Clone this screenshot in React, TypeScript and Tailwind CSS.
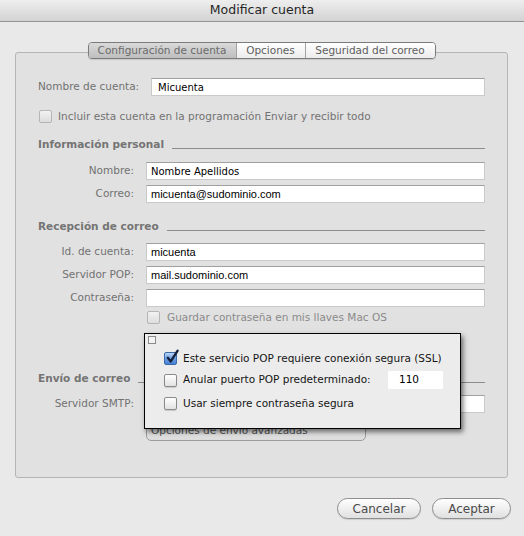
import React from 'react';

type FieldProps = { value?: string; helvetica?: boolean };

const Field: React.FC<FieldProps> = ({ value = '', helvetica = false }) => (
  <div
    className={
      helvetica
        ? "flex h-[18px] flex-1 items-center border border-[#cacaca] border-t-[#a0a0a0] bg-white pl-[4px] font-['Liberation_Sans',sans-serif] text-[11px] text-black"
        : 'flex h-[18px] flex-1 items-center border border-[#cacaca] border-t-[#a0a0a0] bg-white pl-[4px] text-[10px] text-black'
    }
  >
    {value}
  </div>
);

const Box: React.FC<{ dim?: boolean }> = ({ dim = false }) => (
  <span
    className={
      dim
        ? 'h-[13px] w-[13px] shrink-0 rounded-[2px] border border-[#b6b6b6] bg-gradient-to-b from-[#f2f2f2] to-[#dddddd]'
        : 'h-[13px] w-[13px] shrink-0 rounded-[2px] border border-[#8a8a8a] bg-gradient-to-b from-white to-[#e2e2e2] shadow-[0_1px_1px_rgba(0,0,0,0.15)]'
    }
  />
);

const CheckedBox: React.FC = () => (
  <span className="relative h-[13px] w-[13px] shrink-0 rounded-[2px] border border-[#3a69ab] bg-gradient-to-b from-[#bcd6f6] via-[#6b9ee2] to-[#4782d6]">
    <svg viewBox="0 0 14 14" className="absolute -top-[4px] left-[0px] h-[15px] w-[15px] overflow-visible">
      <path
        d="M2.6 8.2 L5.4 11.6 L11.8 1.6"
        fill="none"
        stroke="#15203a"
        strokeWidth="2.2"
        strokeLinecap="round"
        strokeLinejoin="round"
      />
    </svg>
  </span>
);

const Header: React.FC<{ text: string }> = ({ text }) => (
  <div className="flex h-[12px] items-start gap-[8px]">
    <span className="font-bold leading-[12px] text-[#747474]">{text}</span>
    <div className="mt-[10px] h-px flex-1 bg-[#8c8c8c]" />
  </div>
);

const Row: React.FC<{ label: string; children: React.ReactNode; className?: string }> = ({
  label,
  children,
  className = '',
}) => (
  <div className={`flex h-[18px] items-center gap-[12px] ${className}`}>
    <span className="w-[96px] text-right">{label}</span>
    {children}
  </div>
);

export default function App() {
  return (
    <div className="relative h-[536px] w-[524px] overflow-hidden bg-[#e9e9e9] font-['DejaVu_Sans',sans-serif] text-[10.5px] text-[#727272]">
      <div className="flex h-[22px] items-center justify-center border-b border-[#929292] bg-gradient-to-b from-[#eeeeee] to-[#d3d3d3] text-[12.5px] text-[#262626]">
        Modificar cuenta
      </div>

      <div className="pl-[15px] pr-[16px] pt-[30px]">
        <div className="h-[426px] rounded-[3px] border border-[#b5b5b5] bg-[#e1e1e1] px-[22px]">
          <div className="-mt-[11px] flex justify-center">
            <div className="flex h-[17px] overflow-hidden rounded-[4px] border border-[#7b7b7b] shadow-[0_1px_1px_rgba(0,0,0,0.12)]">
              <div className="flex w-[147px] items-center justify-center bg-gradient-to-b from-[#dadada] to-[#bebebe] text-[#6a6a6a]">
                Configuración de cuenta
              </div>
              <div className="flex w-[69px] items-center justify-center border-l border-[#a3a3a3] bg-gradient-to-b from-white to-[#ececec] text-[#5e5e5e]">
                Opciones
              </div>
              <div className="flex w-[130px] items-center justify-center border-l border-[#a3a3a3] bg-gradient-to-b from-white to-[#ececec] text-[#5e5e5e]">
                Seguridad del correo
              </div>
            </div>
          </div>

          <div className="mt-[19px] flex h-[18px] items-center">
            <span className="w-[113px]">Nombre de cuenta:</span>
            <div className="flex h-[18px] flex-1 items-center border border-[#cacaca] border-t-[#a0a0a0] bg-white pl-[6px] text-[10px] text-black">
              Micuenta
            </div>
          </div>

          <div className="mt-[14px] flex h-[13px] items-center gap-[6px] pl-[1px]">
            <Box dim />
            <span>Incluir esta cuenta en la programación Enviar y recibir todo</span>
          </div>

          <div className="mt-[15px]">
            <Header text="Información personal" />
          </div>
          <Row label="Nombre:" className="mt-[12px]">
            <Field value="Nombre Apellidos" />
          </Row>
          <Row label="Correo:" className="mt-[5px]">
            <Field value="micuenta@sudominio.com" helvetica />
          </Row>

          <div className="mt-[17px]">
            <Header text="Recepción de correo" />
          </div>
          <Row label="Id. de cuenta:" className="mt-[11px]">
            <Field value="micuenta" helvetica />
          </Row>
          <Row label="Servidor POP:" className="mt-[5px]">
            <Field value="mail.sudominio.com" helvetica />
          </Row>
          <Row label="Contraseña:" className="mt-[5px]">
            <Field />
          </Row>
          <div className="mt-[4px] flex h-[13px] items-center gap-[7px] pl-[109px] text-[#8a8a8a]">
            <Box dim />
            <span>Guardar contraseña en mis llaves Mac OS</span>
          </div>

          <div className="mt-[48px]">
            <Header text="Envío de correo" />
          </div>
          <Row label="Servidor SMTP:" className="mt-[11px]">
            <Field helvetica />
          </Row>
          <div className="ml-[108px] mt-[7px] flex h-[21px] w-[220px] items-center rounded-[5px] border border-[#9c9c9c] bg-gradient-to-b from-[#f6f6f6] to-[#dcdcdc] pl-[4px] text-[#555]">
            Opciones de envío avanzadas
          </div>
        </div>
      </div>

      <div className="mt-[20px] flex justify-end gap-[11px] pr-[13px] text-[12px] text-[#4a4a4a]">
        <button className="flex h-[21px] w-[84px] items-center justify-center rounded-full border border-[#8e8e8e] bg-gradient-to-b from-white to-[#e0e0e0] shadow-[0_1px_1px_rgba(0,0,0,0.12)]">
          Cancelar
        </button>
        <button className="flex h-[21px] w-[79px] items-center justify-center rounded-full border border-[#8e8e8e] bg-gradient-to-b from-white to-[#e0e0e0] shadow-[0_1px_1px_rgba(0,0,0,0.12)]">
          Aceptar
        </button>
      </div>

      {/* floating options panel */}
      <div className="absolute left-[144px] top-[333px] h-[96px] w-[317px] border border-black bg-[#ececec] text-[#151515] shadow-[2px_3px_5px_rgba(0,0,0,0.55)]">
        <div className="ml-[3px] mt-[2px] h-[8px] w-[8px] border border-[#8a8a8a] bg-[#f3f3f3]" />
        <div className="ml-[19px] mt-[8px] flex h-[13px] items-center gap-[6px]">
          <CheckedBox />
          <span>Este servicio POP requiere conexión segura (SSL)</span>
        </div>
        <div className="ml-[19px] mt-[6px] flex h-[18px] items-center gap-[6px]">
          <Box />
          <span className="flex-1">Anular puerto POP predeterminado:</span>
          <div className="mr-[17px] flex h-[18px] w-[55px] items-center bg-white pl-[11px] text-[10.5px] text-black">
            110
          </div>
        </div>
        <div className="ml-[19px] mt-[8px] flex h-[13px] items-center gap-[6px]">
          <Box />
          <span>Usar siempre contraseña segura</span>
        </div>
      </div>
    </div>
  );
}
